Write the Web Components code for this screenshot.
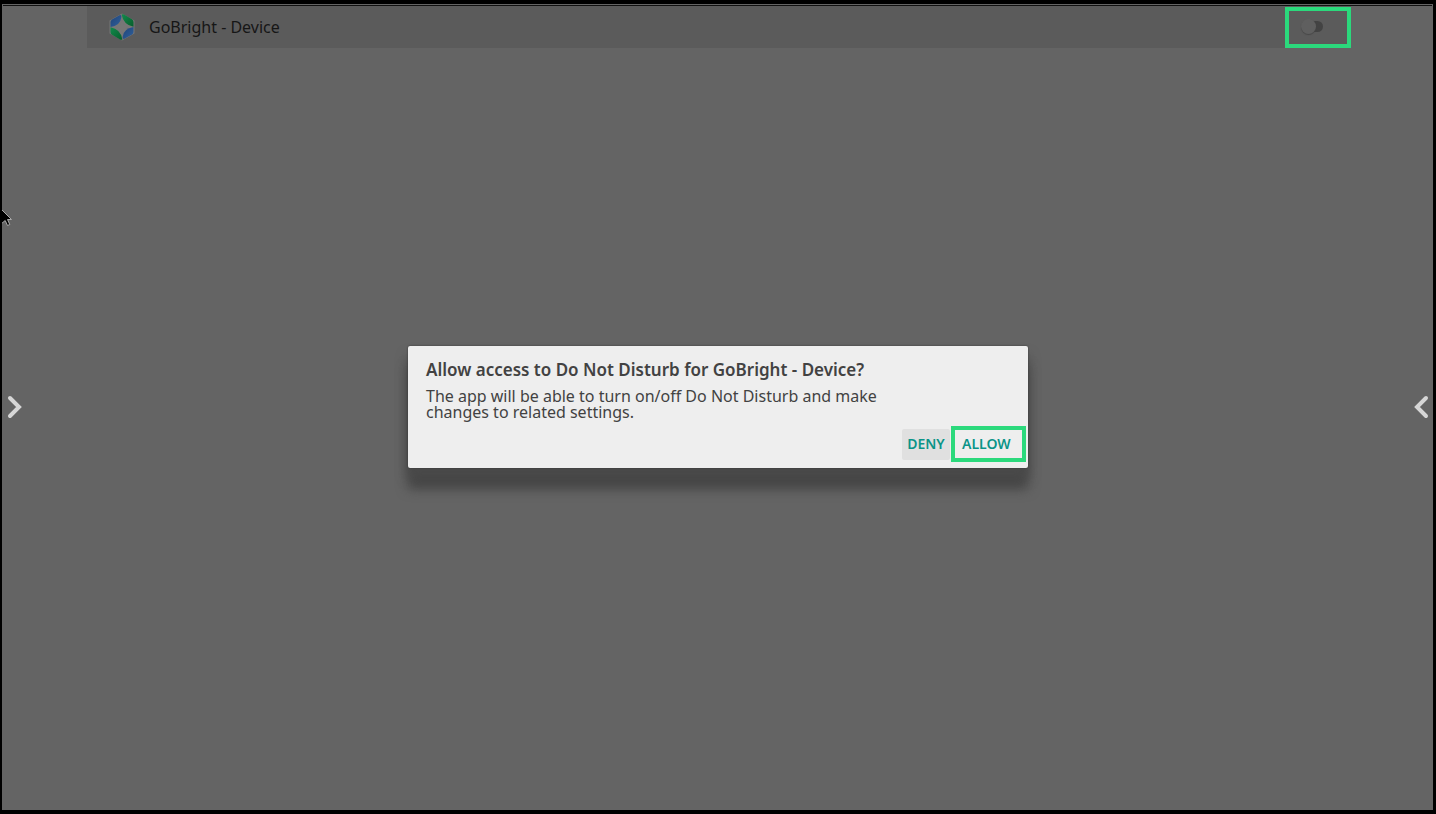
<!DOCTYPE html>
<html lang="en">
<head>
<meta charset="utf-8">
<title>GoBright - Device</title>
<style>
html, body { height: 100%; margin: 0; background: #000; }
body { font-family: "Noto Sans", "Open Sans", sans-serif; }
</style>
</head>
<body>
<device-screen>
  <app-bar slot="bar" name="GoBright - Device"></app-bar>
  <edge-arrow slot="left" direction="right" label="Open left panel"></edge-arrow>
  <permission-dialog>
    <span slot="title">Allow access to Do Not Disturb for GoBright - Device?</span>
    <span slot="text">The app will be able to turn on/off Do Not Disturb and make changes to related settings.</span>
    <dialog-button slot="actions" focused>DENY</dialog-button>
    <dialog-button slot="actions" marked>ALLOW</dialog-button>
  </permission-dialog>
  <edge-arrow slot="right" direction="left" label="Open right panel"></edge-arrow>
</device-screen>
<script>
function define(name, html, setup) {
  customElements.define(name, class extends HTMLElement {
    constructor() {
      super();
      this.attachShadow({ mode: "open" }).innerHTML = html;
    }
    connectedCallback() { if (setup) setup(this, this.shadowRoot); }
  });
}

define("device-screen", `
<style>
:host { display: flex; flex-direction: column; box-sizing: border-box; min-height: 100vh;
  border: solid #000; border-width: 4px 3px 4px 2px; background: #646464; position: relative; }
.line { height: 1px; margin: 1px 1px 0; background: #111; }
.stage { flex: 1; display: grid; grid-template-columns: 1fr auto 1fr; align-items: center;
  padding: 0 4px 0 5px; }
.right { justify-self: end; }
.cursor { position: absolute; left: 0; top: 206px; }
</style>
<div class="line"></div>
<slot name="bar"></slot>
<div class="stage">
  <div><slot name="left"></slot></div>
  <slot></slot>
  <div class="right"><slot name="right"></slot></div>
</div>
<svg class="cursor" width="12" height="18" viewBox="0 0 12 18" aria-hidden="true">
  <path d="M-1 -1 9.500 9.500H5.500L7.800 14.500 5.500 15.500 3.200 10.500 -1 14Z" fill="#000" stroke="#aaa" stroke-width="1"/>
</svg>`);

define("app-bar", `
<style>
:host { display: block; margin: 0 82px 0 85px; background: #5b5b5b; }
.row { display: flex; align-items: center; height: 42px; padding-left: 22px; }
.logo { width: 26px; height: 28px; }
h1 { flex: 1; margin: 0 0 0 14px; font-size: 16px; line-height: 24px; font-weight: 400; color: #161616; }
label { display: flex; align-items: center; box-sizing: border-box; width: 66px; height: 41px;
  border: 4px solid #2bd97c; padding: 0 0 2px 12px; margin-top: 1px; }
input { appearance: none; margin: 0; width: 22px; height: 16px; position: relative; }
input::before { content: ""; position: absolute; left: 6px; top: 2px; width: 16px; height: 11px;
  border-radius: 6px; background: #434343; }
input::after { content: ""; position: absolute; left: 0; top: 0; width: 15px; height: 15px;
  border-radius: 50%; background: #5f5f5f; box-shadow: 0 1px 1px #484848; }
</style>
<div class="row">
  <svg class="logo" viewBox="0 0 26 28" aria-hidden="true">
    <defs>
      <linearGradient id="b" x1="0" y1="0" x2="1" y2="1"><stop stop-color="#1f4478"/><stop offset="1" stop-color="#30609c"/></linearGradient>
      <linearGradient id="g" x1="0" y1="0" x2="1" y2="1"><stop stop-color="#128a4c"/><stop offset="1" stop-color="#075e2c"/></linearGradient>
    </defs>
    <path d="M13 1.500 24.500 8V20L13 26.500 1.500 20V8Z" fill="#777" stroke="#777" stroke-width="2" stroke-linejoin="round"/>
    <path d="M1.500 14V9Q1.500 7.500 3 6.500L10.500 2.200Q12.600 1.500 12.400 4Q11.500 12.500 1.500 14Z" fill="url(#b)"/>
    <path d="M12.600 1.500Q14 1 15 1.600L23 6.200Q24.500 7.100 24.500 9V13.700Q14.500 12 12.600 1.500Z" fill="url(#g)"/>
    <path d="M24.500 14V19Q24.500 20.500 23 21.500L15.500 25.800Q13.400 26.500 13.600 24Q14.500 15.500 24.500 14Z" fill="url(#b)"/>
    <path d="M13.400 26.500Q12 27 11 26.400L3 21.800Q1.500 20.900 1.500 19V14.300Q11.500 16 13.400 26.500Z" fill="url(#g)"/>
    <path d="M13 6.500Q14 13 20 14Q14 15 13 21.500Q12 15 6 14Q12 13 13 6.500Z" fill="#777"/>
  </svg>
  <h1></h1>
  <label><input type="checkbox" role="switch"></label>
</div>`, (el, root) => {
  root.querySelector("h1").textContent = el.getAttribute("name");
  root.querySelector("input").setAttribute("aria-label", el.getAttribute("name"));
});

define("edge-arrow", `
<style>
:host { display: block; }
:host([direction="left"]) svg { transform: scaleX(-1); }
button { display: block; padding: 0; border: 0; background: none; margin-bottom: 44px; }
svg { display: block; }
</style>
<button type="button"><svg width="16" height="24" viewBox="0 0 16 24" aria-hidden="true">
  <path d="M3 3 12 12 3 21" fill="none" stroke="#d6d6d6" stroke-width="4" stroke-linecap="round" stroke-linejoin="miter"/>
</svg></button>`, (el, root) => {
  root.querySelector("button").setAttribute("aria-label", el.getAttribute("label"));
});

define("permission-dialog", `
<style>
:host { display: block; width: 620px; max-width: 90vw; margin-bottom: 44px; }
section { box-sizing: border-box; padding: 12px 2px 6px 18px; border-radius: 2px; background: #eee;
  box-shadow: 0 0 2px #333, 0 10px 12px #4a4a4a, 0 21px 12px #454545; color: #424242; }
h2 { margin: 0; font-size: 17px; line-height: 24px; font-weight: 600; }
p { margin: 6px 0 0; max-width: 480px; font-size: 16px; line-height: 16px; }
.actions { display: flex; justify-content: flex-end; align-items: center; gap: 1px; margin-top: 6px; }
</style>
<section role="dialog" aria-labelledby="t">
  <h2 id="t"><slot name="title"></slot></h2>
  <p><slot name="text"></slot></p>
  <div class="actions"><slot name="actions"></slot></div>
</section>`);

define("dialog-button", `
<style>
:host { display: block; }
button { display: block; box-sizing: border-box; height: 31px; padding: 0; border: 0; border-radius: 2px;
  background: none; color: #0b9488; font-family: inherit; font-size: 14px; line-height: 20px; font-weight: 600; }
:host([focused]) button { background: #e0e0e0; width: 48px; }
:host([marked]) button { width: 75px; height: 36px; border: 4px solid #2bd97c; border-radius: 0;
  padding: 0 7px; text-align: left; }
</style>
<button type="button"><slot></slot></button>`);
</script>
</body>
</html>
